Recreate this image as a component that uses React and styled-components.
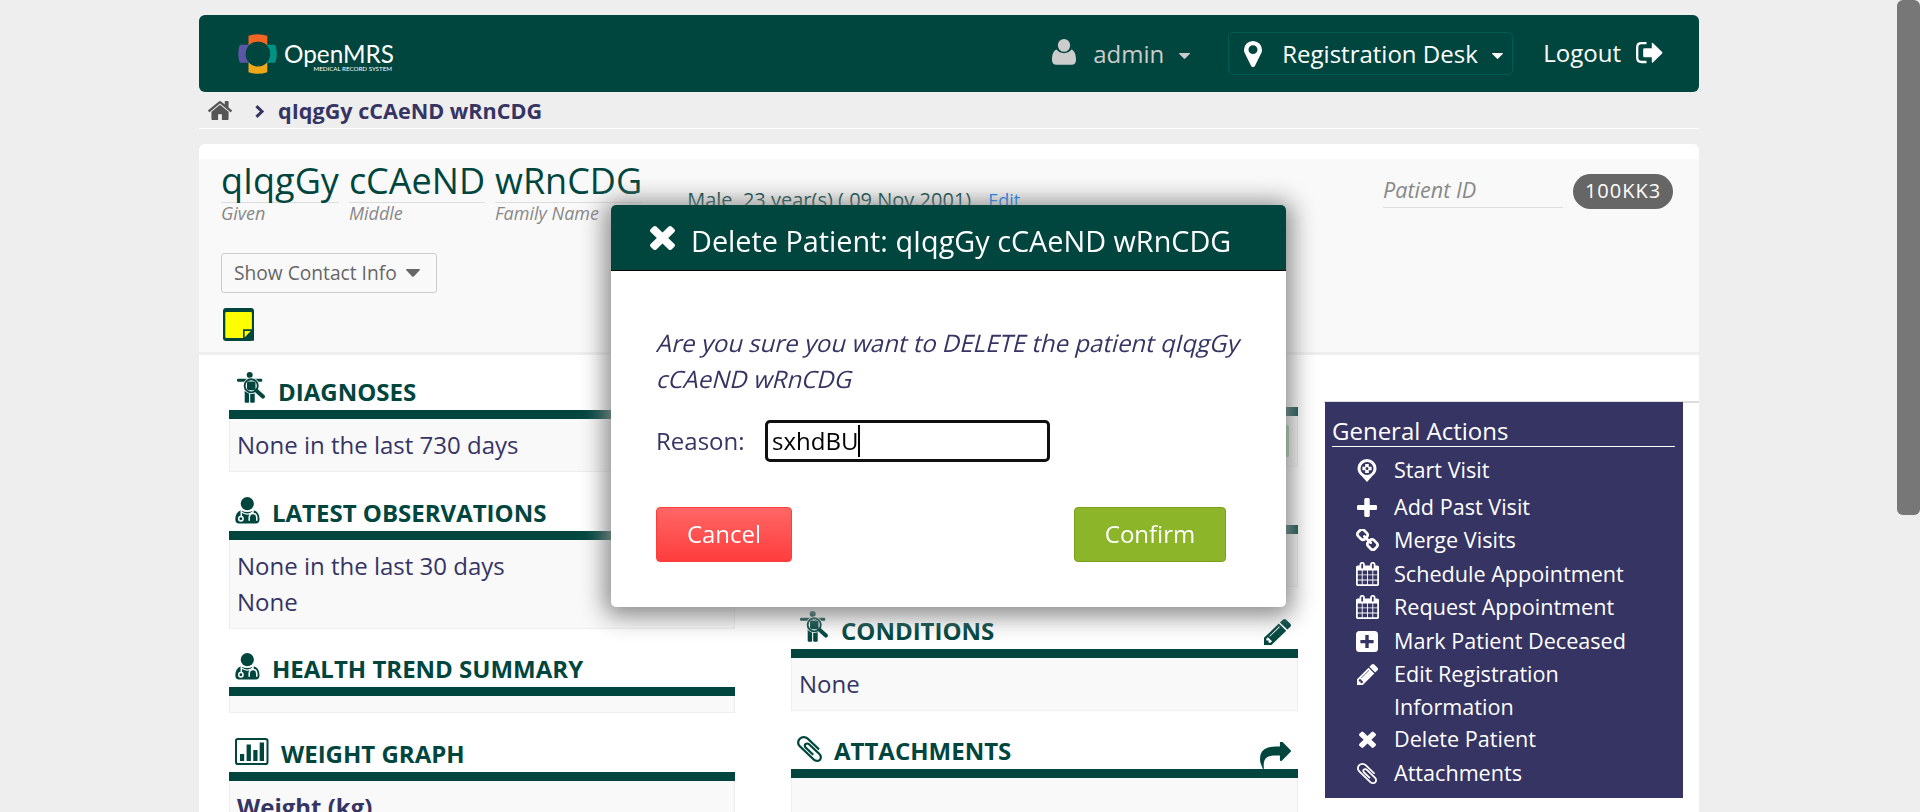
import React from "react";
import styled, { createGlobalStyle } from "styled-components";

const GREEN = "#00463f";
const INDIGO = "#363463";

const GlobalStyle = createGlobalStyle`
  * { box-sizing: border-box; }
  html, body { margin: 0; height: 812px; overflow: hidden; background: #eeeeee; }
  body { font-family: "Open Sans", sans-serif; font-size: 24px; line-height: 36px; color: ${INDIGO}; }
`;

/* ---------- icons ---------- */
const Svg = styled.svg`
  display: block;
  flex: none;
  fill: currentColor;
`;

const PATHS = {
  home: "M1472 992v480q0 26-19 45t-45 19h-384v-384h-256v384h-384q-26 0-45-19t-19-45v-480q0-1 .5-3t.5-3l575-474 575 474q1 2 1 6zm223-69l-62 74q-8 9-21 11h-3q-13 0-21-7l-692-577-692 577q-12 8-24 7-13-2-21-11l-62-74q-8-10-7-23.5t11-21.5l719-599q32-26 76-26t76 26l244 204v-195q0-14 9-23t23-9h192q14 0 23 9t9 23v408l219 182q10 8 11 21.5t-7 23.5z",
  times: "M1490 1322q0 40-28 68l-136 136q-28 28-68 28t-68-28l-294-294-294 294q-28 28-68 28t-68-28l-136-136q-28-28-28-68t28-68l294-294-294-294q-28-28-28-68t28-68l136-136q28-28 68-28t68 28l294 294 294-294q28-28 68-28t68 28l136 136q28 28 28 68t-28 68l-294 294 294 294q28 28 28 68z",
  plus: "M1600 736v192q0 40-28 68t-68 28h-416v416q0 40-28 68t-68 28h-192q-40 0-68-28t-28-68v-416h-416q-40 0-68-28t-28-68v-192q0-40 28-68t68-28h416v-416q0-40 28-68t68-28h192q40 0 68 28t28 68v416h416q40 0 68 28t28 68z",
  calendar: "M192 1664h288v-288h-288v288zm352 0h320v-288h-320v288zm-352-352h288v-320h-288v320zm352 0h320v-320h-320v320zm-352-384h288v-288h-288v288zm736 736h320v-288h-320v288zm-384-736h320v-288h-320v288zm768 736h288v-288h-288v288zm-384-352h320v-320h-320v320zm-352-864v-288q0-13-9.5-22.5t-22.5-9.5h-64q-13 0-22.5 9.5t-9.5 22.5v288q0 13 9.5 22.5t22.5 9.5h64q13 0 22.5-9.5t9.5-22.5zm736 864h288v-320h-288v320zm-384-384h320v-288h-320v288zm384 0h288v-288h-288v288zm32-480v-288q0-13-9.5-22.5t-22.5-9.5h-64q-13 0-22.5 9.5t-9.5 22.5v288q0 13 9.5 22.5t22.5 9.5h64q13 0 22.5-9.5t9.5-22.5zm384-64v1280q0 52-38 90t-90 38h-1408q-52 0-90-38t-38-90v-1280q0-52 38-90t90-38h128v-96q0-66 47-113t113-47h64q66 0 113 47t47 113v96h384v-96q0-66 47-113t113-47h64q66 0 113 47t47 113v96h128q52 0 90 38t38 90z",
  pencil: "M491 1536l91-91-235-235-91 91v107h128v128h107zm523-928q0-22-22-22-10 0-17 7l-542 542q-7 7-7 17 0 22 22 22 10 0 17-7l542-542q7-7 7-17zm-54-192l416 416-832 832h-416v-416zm683 96q0 53-37 90l-166 166-416-416 166-165q36-38 90-38 53 0 91 38l235 234q37 39 37 91z",
  pin: "M1152 640q0-106-75-181t-181-75-181 75-75 181 75 181 181 75 181-75 75-181zm256 0q0 109-33 179l-364 774q-16 33-47.5 52t-67.5 19-67.5-19-46.5-52l-365-774q-33-70-33-179 0-212 150-362t362-150 362 150 150 362z",
  clip: "M1596 1385q0 117-79 196t-196 79q-135 0-235-100l-777-776q-113-115-113-271 0-159 110-270t269-111q158 0 273 113l605 606q10 10 10 22 0 16-30.5 46.5t-46.5 30.5q-13 0-23-10l-606-607q-79-77-181-77-106 0-179 75t-73 181q0 105 76 181l776 777q63 63 145 63 64 0 106-42t42-106q0-82-63-145l-581-581q-26-24-60-24-29 0-48 19t-19 48q0 32 25 59l410 410q10 10 10 22 0 16-31 47t-47 31q-12 0-22-10l-410-410q-63-61-63-149 0-82 57-139t139-57q88 0 149 63l581 581q100 98 100 235z",
  share: "M1792 640q0 26-19 45l-512 512q-19 19-45 19t-45-19-19-45v-256h-224q-98 0-175.5 6t-154 21.5-133 42.5-105.5 69.5-80 101-48.5 138.5-17.5 181q0 55 5 123 0 6 2.5 23.5t2.5 26.5q0 15-8.5 25t-23.5 10q-16 0-28-17-7-9-13-22t-13.5-30-10.5-24q-127-285-127-451 0-199 53-333 162-403 875-403h224v-256q0-26 19-45t45-19 45 19l512 512q19 19 19 45z",
  link: "M1520 1216q0-40-28-68l-208-208q-28-28-68-28-42 0-72 32 3 3 19 18.5t21.5 21.5 15 19 13 25.5 3.5 27.5q0 40-28 68t-68 28q-15 0-27.5-3.5t-25.5-13-19-15-21.5-21.5-18.5-19q-33 31-33 73 0 40 28 68l206 207q27 27 68 27 40 0 68-26l147-146q28-28 28-67zm-703-705q0-40-28-68l-206-207q-28-28-68-28-39 0-68 27l-147 146q-28 28-28 67 0 40 28 68l208 208q27 27 68 27 42 0 72-31-3-3-19-18.5t-21.5-21.5-15-19-13-25.5-3.5-27.5q0-40 28-68t68-28q15 0 27.5 3.5t25.5 13 19 15 21.5 21.5 18.5 19q33-31 33-73zm895 705q0 120-85 203l-147 146q-83 83-203 83-121 0-204-85l-206-207q-83-83-83-203 0-123 88-209l-88-88q-86 88-208 88-120 0-204-84l-208-208q-84-84-84-204t85-203l147-146q83-83 203-83 121 0 204 85l206 207q83 83 83 203 0 123-88 209l88 88q86-88 208-88 120 0 204 84l208 208q84 84 84 204z",
};

/* view boxes are trimmed to the drawn outline so width and height are ink sizes */
const BOXES = {
  home: "89 253 1614 1283",
  times: "302 322 1188 1232",
  plus: "192 128 1408 1408",
  calendar: "64 0 1664 1792",
  pencil: "128 149 1515 1515",
  pin: "384 128 1024 1536",
  clip: "196 130 1400 1530",
  share: "0 128 1792 1540",
  link: "80 80 1632 1632",
};

const Icon = ({ name, w, h }) => (
  <Svg width={w} height={h} viewBox={BOXES[name]} preserveAspectRatio="none">
    <path d={PATHS[name]} />
  </Svg>
);

const Caret = ({ w = 11, h = 6 }) => (
  <Svg width={w} height={h} viewBox="0 0 11 6" preserveAspectRatio="none">
    <path d="M.6 0h9.8q.9.3.3 1L6.2 5.600q-.7.6-1.400 0L.3 1Q-.3.3.6 0z" />
  </Svg>
);

const UserIcon = () => (
  <Svg width="24" height="26" viewBox="0 0 24 26">
    <ellipse cx="12" cy="6.4" rx="6.1" ry="6.4" />
    <path d="M4.6 10.6C1.6 11.6 0 15.300 0 21c0 3 1.600 4.700 4.200 4.700h15.600c2.600 0 4.200-1.700 4.200-4.700 0-5.700-1.600-9.400-4.600-10.400-1.600 2.200-4.300 3.600-7.400 3.600s-5.800-1.400-7.400-3.600z" />
  </Svg>
);

const SignOutIcon = () => (
  <Svg width="27" height="22" viewBox="0 0 27 22">
    <path d="M10.500 1.200H5.400Q1.200 1.200 1.200 5.400v10.400q0 4.200 4.200 4.200h5.100" fill="none" stroke="currentColor" strokeWidth="2.300" />
    <path d="M7.200 7.400q0-1.200 1.200-1.200h7.400V1.400q0-1.300 1.100-.4l9.200 8.900q.8.800 0 1.600l-9.200 8.900q-1.100.9-1.100-.4v-4.800H8.400q-1.200 0-1.200-1.200z" />
  </Svg>
);

const DiagnosisIcon = () => (
  <Svg width="29" height="31" viewBox="0 0 29 31">
    <circle cx="12.700" cy="3" r="3" />
    <rect x="0" y="6.800" width="25.300" height="3" rx="1.200" />
    <rect x="7.700" y="8" width="10" height="13" />
    <rect x="7.700" y="20" width="4.400" height="10.800" rx="1" />
    <rect x="13.200" y="20" width="4.500" height="10.800" rx="1" />
    <path d="M19.500 18.800l7 6.400" stroke="#fff" strokeWidth="6" />
    <circle cx="14.200" cy="13.800" r="8.200" fill="#fff" />
    <circle cx="14.200" cy="13.800" r="7.500" />
    <circle cx="14.200" cy="13.800" r="5.600" fill="#fff" />
    <path d="M11 9.500h6.200q1 .2 1.300 1.500v5.600l-1.300 1.700h-6.200l-1-1.700V11q.2-1.300 1-1.500z" />
    <path d="M19.200 18.600l6.700 6" stroke="currentColor" strokeWidth="4" strokeLinecap="round" />
  </Svg>
);

const DoctorIcon = () => (
  <Svg width="25" height="27" viewBox="0 0 25 27">
    <circle cx="12.300" cy="6.700" r="6.600" />
    <path d="M6 13.200Q12.300 17 18.600 13.200 24.600 15 24.500 22.600q-.1 3.900-3.600 4H4Q.4 26.500.3 22.600.2 15 6 13.200z" />
    <g fill="none" stroke="#fff" strokeWidth="1.500">
      <path d="M6.300 12.500v7" />
      <circle cx="5.900" cy="21.700" r="2.200" />
      <path d="M18 12.500v3.600M14.200 23.800v-3.200q.2-4.200 3.800-4.200t3.800 4.200v3.200" />
      <path d="M6.300 14.800q6 4.700 11.700 0" strokeWidth="1.200" />
    </g>
  </Svg>
);

const ChartIcon = () => (
  <Svg width="34" height="27" viewBox="0 0 34 27">
    <rect x="1" y="1" width="31.500" height="25" rx="1.800" fill="none" stroke="currentColor" strokeWidth="2" />
    <path d="M5 16h4.200v7H5zM11.600 6.600h4.300V23h-4.300zM18.300 12h4.200v11h-4.200zM24.700 4.600H29V23h-4.300z" />
  </Svg>
);

const VisitIcon = () => (
  <Svg width="20" height="23" viewBox="0 0 20 23">
    <path fillRule="evenodd" d="M10 0a9.500 9.500 0 0 1 9.500 9.500c0 3.300-1.800 5.600-4.200 7.500L10 23l-5.300-6C2.300 15.100.5 12.800.5 9.500A9.500 9.500 0 0 1 10 0zm0 3a6.500 6.500 0 1 0 0 13 6.500 6.500 0 0 0 0-13z" />
    <path fillRule="evenodd" d="M8.200 4.900h3.600v2.800h2.800v3.600h-2.800v2.800H8.200v-2.800H5.400V7.700h2.800zM10 8a1.500 1.500 0 1 0 0 3 1.500 1.500 0 0 0 0-3z" />
  </Svg>
);

const PlusBoxIcon = () => (
  <Svg width="22" height="21" viewBox="0 0 22 21">
    <path fillRule="evenodd" d="M3.500 0h15Q22 0 22 3.500v14q0 3.500-3.500 3.500h-15Q0 21 0 17.500v-14Q0 0 3.500 0zM9.300 4v4.900H4.400v3.300h4.900V17h3.400v-4.800h4.900V8.900h-4.900V4z" />
  </Svg>
);

const NoteIcon = () => (
  <Svg width="31" height="33" viewBox="0 0 31 33">
    <rect width="31" height="33" rx="3" fill={GREEN} />
    <rect x="2.300" y="4" width="26.600" height="26" rx="1" fill="#ffff00" />
    <path d="M20 21.300h11V33l-4-2.700h-7z" fill={GREEN} />
    <path d="M21.600 23h6.200l-6.200 6.600z" fill="#ffff00" />
  </Svg>
);

const ChevronIcon = () => (
  <Svg width="10" height="13" viewBox="0 0 10 13">
    <path d="M1.400 1.200l5.600 5.300-5.600 5.300" fill="none" stroke="currentColor" strokeWidth="3" />
  </Svg>
);

const LogoMark = () => (
  <Svg width="40" height="40" viewBox="0 0 40 40">
    <path d="M10.500 1.800Q20-1.400 29.300 1.800V12a12.500 12.500 0 0 0-18.800 0z" fill="#f26522" />
    <path d="M10.500 38.200q9.500 3.200 18.800 0V28a12.500 12.500 0 0 1-18.800 0z" fill="#f0a818" />
    <path d="M1.800 10.700Q-1.400 20 1.800 28.800H12a12.500 12.500 0 0 1 0-18.100z" fill="#5b57a6" />
    <path d="M37.200 10.700q3.200 9.300 0 18.100H28a12.500 12.500 0 0 0 0-18.100z" fill="#009384" />
    <circle cx="19.900" cy="20" r="12.300" fill={GREEN} />
  </Svg>
);

/* ---------- page frame ---------- */
const Page = styled.div`
  width: 1500px;
  height: 812px;
  margin-left: 199px;
  padding-top: 15px;
  overflow: hidden;
`;

const ScrollThumb = styled.div`
  position: fixed;
  top: 0;
  right: 0;
  width: 23px;
  height: 515px;
  border-radius: 6px;
  background: #777777;
`;

const TopBar = styled.header`
  display: flex;
  align-items: center;
  height: 77px;
  padding: 0 36px 0 39px;
  border-radius: 6px;
  background: ${GREEN};
  color: #ffffff;
`;

const Logo = styled.div`
  display: flex;
  align-items: center;
  gap: 6px;
  margin-right: auto;
`;

const LogoText = styled.div`
  display: flex;
  flex-direction: column;
  align-items: flex-end;
  padding-top: 5px;
`;

const LogoName = styled.span`
  font: 400 24.3px/25px Lato, sans-serif;
`;

const LogoTag = styled.span`
  padding-right: 2px;
  font: 400 6.2px/6px Lato, sans-serif;
`;

const UserMenu = styled.div`
  display: flex;
  align-items: center;
  color: #cccccc;
`;

const UserGlyph = styled.span`
  margin-bottom: 3px;
`;

const CaretSlot = styled.span`
  padding-top: 5px;
`;

const UserName = styled.span`
  margin: 0 15px 0 17px;
`;

const LocationMenu = styled.div`
  display: flex;
  align-items: center;
  width: 285px;
  height: 43px;
  margin: 0 30px 0 38px;
  padding: 0 9px 0 15px;
  border: 1px solid #005c50;
  border-radius: 5px;
`;

const LocationName = styled.span`
  margin: 0 auto 0 20px;
`;

const Logout = styled.div`
  display: flex;
  align-items: center;
  gap: 15px;
  padding-bottom: 1px;
`;

const Breadcrumbs = styled.nav`
  display: flex;
  align-items: center;
  height: 37px;
  padding-left: 9px;
  border-bottom: 1px solid #ffffff;
  font-size: 21.6px;
  font-weight: 700;
`;

const HomeLink = styled.span`
  margin-right: 23px;
  color: #555555;
`;

const CrumbArrow = styled.span`
  padding-top: 3px;
`;

const CrumbName = styled.span`
  margin-left: 13px;
  padding-top: 1px;
`;

const Card = styled.main`
  height: 700px;
  margin-top: 15px;
  padding-top: 15px;
  border-radius: 6px 6px 0 0;
  background: #ffffff;
`;

/* ---------- patient header ---------- */
const PatientHeader = styled.section`
  height: 196px;
  padding: 0 26px 0 22px;
  border-bottom: 3px solid #eeeeee;
  background: #f9f9f9;
`;

const PatientRow = styled.div`
  display: flex;
  align-items: flex-start;
  height: 94px;
`;

const NamePart = styled.div`
  margin-right: 10px;
`;

const NameValue = styled.div`
  height: 44px;
  border-bottom: 1px solid #dddddd;
  font-size: 36px;
  line-height: 43px;
  color: ${GREEN};
`;

const NameLabel = styled.div`
  font-size: 18px;
  line-height: 21px;
  font-style: italic;
  color: #888888;
`;

const Demographics = styled.div`
  display: flex;
  gap: 17px;
  margin: 26px auto 0 35px;
  font-size: 20px;
  line-height: 30px;
  color: ${GREEN};
`;

const EditLink = styled.a`
  font-size: 18px;
  color: #007fff;
`;

const IdLabel = styled.div`
  width: 180px;
  height: 34px;
  margin: 15px 10px 0 0;
  border-bottom: 1px solid #dddddd;
  font-size: 21.600px;
  line-height: 32px;
  font-style: italic;
  color: #888888;
`;

const IdBadge = styled.div`
  width: 100px;
  height: 35px;
  margin-top: 15px;
  border-radius: 18px;
  background: #666666;
  color: #ffffff;
  font-size: 20px;
  line-height: 34px;
  letter-spacing: 1px;
  text-align: center;
`;

const ContactButton = styled.div`
  display: flex;
  align-items: center;
  justify-content: space-between;
  width: 216px;
  height: 40px;
  margin-bottom: 15px;
  padding: 0 16px 0 12px;
  border: 1px solid #cccccc;
  border-radius: 3px;
  font-size: 19.2px;
  color: #666666;
`;

const NoteSlot = styled.div`
  padding-left: 2px;
`;

/* ---------- dashboard ---------- */
const Dashboard = styled.div`
  display: flex;
  align-items: flex-start;
  padding-left: 30px;
`;

const Column = styled.div`
  width: ${(p) => p.$w}px;
  margin-right: ${(p) => p.$gap}px;
`;

const PanelHeading = styled.div`
  display: flex;
  align-items: flex-end;
  height: ${(p) => p.$h + 9}px;
  padding: 0 7px 0 ${(p) => p.$inset}px;
  border-bottom: 9px solid ${GREEN};
  color: ${GREEN};
`;

const PanelIcon = styled.span`
  margin-bottom: 7px;
`;

const PanelTitle = styled.span`
  margin: 0 auto 0 ${(p) => p.$gap}px;
  font-weight: 700;
`;

const PanelAction = styled.span`
  margin-bottom: ${(p) => p.$lift}px;
`;

const PanelBody = styled.div`
  min-height: 17px;
  height: ${(p) => (p.$h ? p.$h + "px" : "auto")};
  padding: 8px 7px;
  border: 1px solid #eeeeee;
  border-top: 0;
  background: #f9f9f9;
  font-weight: ${(p) => (p.$bold ? 700 : 400)};
`;

const VisitButton = styled.div`
  width: 200px;
  height: 32px;
  margin: 1px 1px 0 auto;
  border-radius: 2px;
  background: #8ccf90;
`;

const Panel = ({ icon, title, h, inset, gap, action, lift, bodyHeight, bold, children }) => (
  <section>
    <PanelHeading $h={h} $inset={inset}>
      <PanelIcon>{icon}</PanelIcon>
      <PanelTitle $gap={gap}>{title}</PanelTitle>
      {action && <PanelAction $lift={lift}>{action}</PanelAction>}
    </PanelHeading>
    <PanelBody $h={bodyHeight} $bold={bold}>{children}</PanelBody>
  </section>
);

const ActionsColumn = styled.aside`
  width: 375px;
  margin-top: 46px;
  border-top: 2px solid #dddddd;
`;

const ActionsPanel = styled.div`
  width: 358px;
  height: 396px;
  margin: -1px 0 0 1px;
  padding: 11px 8px 0 7px;
  background: ${INDIGO};
  color: #ffffff;
`;

const ActionsTitle = styled.div`
  height: 34px;
  margin-bottom: 6px;
  border-bottom: 1px solid #ffffff;
`;

const ActionItem = styled.div`
  display: flex;
  height: ${(p) => p.$h}px;
  padding-left: 19px;
  font-size: 21.6px;
  line-height: 33px;
`;

const ActionIcon = styled.span`
  display: flex;
  align-items: center;
  justify-content: center;
  width: 32px;
  height: 34px;
  margin-right: 11px;
`;

const ActionText = styled.span`
  width: 250px;
`;

const ACTIONS = [
  { id: "start", icon: <VisitIcon />, text: "Start Visit", h: 37 },
  { id: "past", icon: <Icon name="plus" w={20} h={19} />, text: "Add Past Visit", h: 33 },
  { id: "merge", icon: <Icon name="link" w={23} h={23} />, text: "Merge Visits", h: 34 },
  { id: "schedule", icon: <Icon name="calendar" w={23} h={24} />, text: "Schedule Appointment", h: 33 },
  { id: "request", icon: <Icon name="calendar" w={23} h={24} />, text: "Request Appointment", h: 34 },
  { id: "deceased", icon: <PlusBoxIcon />, text: "Mark Patient Deceased", h: 33 },
  { id: "edit", icon: <Icon name="pencil" w={21} h={21} />, text: <>Edit Registration<br />Information</>, h: 65 },
  { id: "delete", icon: <Icon name="times" w={17} h={17} />, text: "Delete Patient", h: 34 },
  { id: "attach", icon: <Icon name="clip" w={20} h={21} />, text: "Attachments", h: 33 },
];

/* ---------- dialog ---------- */
const Dialog = styled.div`
  position: fixed;
  left: 611px;
  top: 205px;
  width: 675px;
  height: 402px;
  border-radius: 5px;
  background: #ffffff;
  box-shadow: 0 3px 24px 6px #888888;
`;

const DialogHeader = styled.div`
  display: flex;
  align-items: center;
  gap: 16px;
  height: 66px;
  padding: 7px 0 0 39px;
  border-bottom: 1px solid #000000;
  border-radius: 5px 5px 0 0;
  background: ${GREEN};
  color: #ffffff;
  font-size: 28.800px;
`;

const DialogIcon = styled.span`
  margin-bottom: 7px;
`;

const DialogBody = styled.div`
  padding: 54px 44px 0 45px;
`;

const Message = styled.p`
  margin: 0;
  padding-left: 2px;
`;

/* upright face slanted line by line, keeping its wide letterforms */
const SlantedLine = styled.span`
  display: block;
  white-space: nowrap;
  transform: skewX(-14deg);
`;

const ReasonRow = styled.label`
  display: flex;
  align-items: center;
  gap: 20px;
  margin-top: 23px;
`;

const ReasonLabel = styled.span`
  width: 89px;
`;

const ReasonField = styled.div`
  display: flex;
  align-items: center;
  width: 285px;
  height: 42px;
  padding-left: 4px;
  border: 3px solid #101010;
  border-radius: 5px;
  color: #000000;
`;

const TextCursor = styled.span`
  width: 2px;
  height: 32px;
  background: #000000;
`;

const ButtonRow = styled.div`
  display: flex;
  justify-content: space-between;
  width: 570px;
  margin-top: 45px;
`;

const Button = styled.button`
  width: ${(p) => p.$w}px;
  height: 55px;
  padding: 0 0 2px;
  border: 1px solid ${(p) => (p.$danger ? "#ff3d3d" : "#7aa01d")};
  border-radius: 4px;
  background: ${(p) => (p.$danger ? "linear-gradient(#ff6666, #ff3d3d)" : "#8db529")};
  color: #ffffff;
  font: 400 24px/36px "Open Sans", sans-serif;
`;

export default function App() {
  return (
    <>
      <GlobalStyle />
      <Page>
        <TopBar>
          <Logo>
            <LogoMark />
            <LogoText>
              <LogoName>OpenMRS</LogoName>
              <LogoTag>MEDICAL RECORD SYSTEM</LogoTag>
            </LogoText>
          </Logo>
          <UserMenu>
            <UserGlyph><UserIcon /></UserGlyph>
            <UserName>admin</UserName>
            <CaretSlot><Caret /></CaretSlot>
          </UserMenu>
          <LocationMenu>
            <Icon name="pin" w={18} h={26} />
            <LocationName>Registration Desk</LocationName>
            <CaretSlot><Caret /></CaretSlot>
          </LocationMenu>
          <Logout>
            Logout
            <SignOutIcon />
          </Logout>
        </TopBar>

        <Breadcrumbs>
          <HomeLink><Icon name="home" w={24} h={19} /></HomeLink>
          <CrumbArrow><ChevronIcon /></CrumbArrow>
          <CrumbName>qIqgGy cCAeND wRnCDG</CrumbName>
        </Breadcrumbs>

        <Card>
          <PatientHeader>
            <PatientRow>
              <NamePart><NameValue>qIqgGy</NameValue><NameLabel>Given</NameLabel></NamePart>
              <NamePart><NameValue>cCAeND</NameValue><NameLabel>Middle</NameLabel></NamePart>
              <NamePart><NameValue>wRnCDG</NameValue><NameLabel>Family Name</NameLabel></NamePart>
              <Demographics>
                <span>Male, 23 year(s) ( 09.Nov.2001)</span>
                <EditLink>Edit</EditLink>
              </Demographics>
              <IdLabel>Patient ID</IdLabel>
              <IdBadge>100KK3</IdBadge>
            </PatientRow>
            <ContactButton>
              Show Contact Info
              <Caret w={14} h={8} />
            </ContactButton>
            <NoteSlot><NoteIcon /></NoteSlot>
          </PatientHeader>

          <Dashboard>
            <Column $w={506} $gap={56}>
              <Panel icon={<DiagnosisIcon />} title="DIAGNOSES" h={55} inset={8} gap={12}>
                None in the last 730 days
              </Panel>
              <Panel icon={<DoctorIcon />} title="LATEST OBSERVATIONS" h={59} inset={6} gap={12}>
                None in the last 30 days<br />None
              </Panel>
              <Panel icon={<DoctorIcon />} title="HEALTH TREND SUMMARY" h={58} inset={6} gap={12} />
              <Panel icon={<ChartIcon />} title="WEIGHT GRAPH" h={59} inset={6} gap={12} bold bodyHeight={60}>
                Weight (kg)
              </Panel>
            </Column>
            <Column $w={507} $gap={26}>
              <Panel icon={<ChartIcon />} title="VISITS" h={52} inset={6} gap={12} bodyHeight={51}>
                <VisitButton />
              </Panel>
              <Panel icon={<DoctorIcon />} title="FAMILY" h={58} inset={6} gap={12} bodyHeight={53} />
              <Panel icon={<DiagnosisIcon />} title="CONDITIONS" h={62} inset={9} gap={12} action={<Icon name="pencil" w={27} h={26} />} lift={4}>
                None
              </Panel>
              <Panel icon={<Icon name="clip" w={25} h={26} />} title="ATTACHMENTS" h={58} inset={6} gap={12} action={<Icon name="share" w={31} h={27} />} lift={0} bodyHeight={60} />
            </Column>
            <ActionsColumn>
              <ActionsPanel>
                <ActionsTitle>General Actions</ActionsTitle>
                {ACTIONS.map((a) => (
                  <ActionItem key={a.id} $h={a.h}>
                    <ActionIcon>{a.icon}</ActionIcon>
                    <ActionText>{a.text}</ActionText>
                  </ActionItem>
                ))}
              </ActionsPanel>
            </ActionsColumn>
          </Dashboard>
        </Card>
      </Page>

      <Dialog>
        <DialogHeader>
          <DialogIcon><Icon name="times" w={25} h={25} /></DialogIcon>
          Delete Patient: qIqgGy cCAeND wRnCDG
        </DialogHeader>
        <DialogBody>
          <Message>
            <SlantedLine>Are you sure you want to DELETE the patient qIqgGy</SlantedLine>
            <SlantedLine>cCAeND wRnCDG</SlantedLine>
          </Message>
          <ReasonRow>
            <ReasonLabel>Reason:</ReasonLabel>
            <ReasonField>sxhdBU<TextCursor /></ReasonField>
          </ReasonRow>
          <ButtonRow>
            <Button $danger $w={136}>Cancel</Button>
            <Button $w={152}>Confirm</Button>
          </ButtonRow>
        </DialogBody>
      </Dialog>
      <ScrollThumb />
    </>
  );
}
